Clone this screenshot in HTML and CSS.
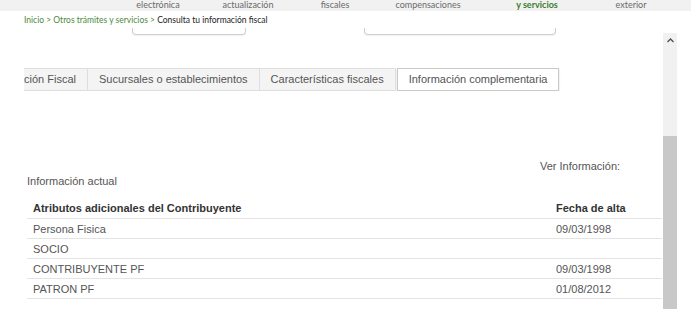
FILE: index.html
```html
<!DOCTYPE html>
<html lang="es">
<head>
<meta charset="utf-8">
<title>Consulta tu información fiscal</title>
<link rel="stylesheet" href="styles.css">
</head>
<body>
<nav class="topnav">
  <span class="nav-item w1">electrónica</span>
  <span class="nav-item w2">actualización</span>
  <span class="nav-item w3">fiscales</span>
  <span class="nav-item w4">compensaciones</span>
  <span class="nav-item w5 active">y servicios</span>
  <span class="nav-item w6">exterior</span>
</nav>
<div class="breadcrumb">
  <a class="crumb">Inicio</a> &gt; <a class="crumb">Otros trámites y servicios</a> &gt; <span class="current">Consulta tu información fiscal</span>
</div>
<div class="main">
  <div class="content">
    <div class="selects">
      <div class="select s1"></div>
      <div class="select s2"></div>
    </div>
    <div class="tabs">
      <div class="tab tab-clip"><span>Ubicación Fiscal</span></div>
      <div class="tab">Sucursales o establecimientos</div>
      <div class="tab">Características fiscales</div>
      <div class="tab tab-active">Información complementaria</div>
    </div>
    <div class="ver">Ver Información:</div>
    <div class="actual">Información actual</div>
    <table class="attrs">
      <thead>
        <tr><th class="c1">Atributos adicionales del Contribuyente</th><th class="c2">Fecha de alta</th></tr>
      </thead>
      <tbody>
        <tr><td>Persona Fisica</td><td>09/03/1998</td></tr>
        <tr><td>SOCIO</td><td></td></tr>
        <tr><td>CONTRIBUYENTE PF</td><td>09/03/1998</td></tr>
        <tr><td>PATRON PF</td><td>01/08/2012</td></tr>
        <tr><td>&nbsp;</td><td></td></tr>
      </tbody>
    </table>
  </div>
  <div class="scrollbar">
    <div class="arrow"><svg width="7" height="5" viewBox="0 0 7 5"><path d="M0.5 4 L3.5 1 L6.5 4" fill="none" stroke="#505050" stroke-width="1.4"/></svg></div>
    <div class="thumb"></div>
  </div>
</div>
</body>
</html>
```
FILE: styles.css
```css
html, body {
  margin: 0;
  padding: 0;
  background: #ffffff;
  overflow: hidden;
}
body {
  width: 691px;
  height: 309px;
  font-family: "Liberation Sans", Arial, sans-serif;
}
.topnav {
  display: flex;
  height: 11px;
  background: #f1f1f1;
  padding-left: 110px;
  font-family: Lato, "Open Sans", sans-serif;
  font-size: 9px;
  line-height: 10px;
  color: #6a6a6a;
  overflow: hidden;
}
.nav-item {
  text-align: center;
  white-space: nowrap;
}
.w1 { width: 96px; }
.w2 { width: 84px; }
.w3 { width: 90px; }
.w4 { width: 96px; }
.w5 { width: 122px; }
.w6 { width: 66px; }
.nav-item.active {
  color: #3c7d2c;
  font-weight: bold;
}
.breadcrumb {
  padding: 4px 0 0 24px;
  height: 13px;
  font-family: Lato, "Open Sans", sans-serif;
  font-size: 8.5px;
  line-height: 10px;
  color: #4b8a3c;
}
.crumb { color: #4b8a3c; }
.current { color: #222222; }
.main {
  display: flex;
}
.content {
  width: 663px;
}
.selects {
  display: flex;
  height: 9px;
}
.select {
  height: 6px;
  border: 1px solid #cfcfcf;
  border-top: none;
  border-radius: 0 0 4px 4px;
  box-shadow: 0 1px 1px rgba(0,0,0,0.06);
}
.s1 { margin-left: 132px; width: 112px; }
.s2 { margin-left: 118px; width: 190px; }
.tabs {
  display: flex;
  margin: 31px 0 0 24px;
  height: 23px;
  overflow: hidden;
  font-size: 11px;
  color: #555555;
}
.tab {
  height: 21px;
  line-height: 21px;
  padding: 0 11px;
  background: #f4f4f4;
  border: 1px solid #dedede;
  border-left: none;
  white-space: nowrap;
  box-shadow: 1px 1px 1px rgba(0,0,0,0.05);
}
.tab-clip {
  width: 52px;
  display: flex;
  justify-content: flex-end;
  overflow: hidden;
  padding: 0 11px 0 0;
}
.tab-active {
  background: #ffffff;
  border: 1px solid #c9c9c9;
  margin-left: 1px;
}
.ver {
  margin: 69px 0 0 540px;
  font-size: 11px;
  line-height: 13px;
  color: #555555;
}
.actual {
  margin: 2px 0 0 27px;
  font-size: 11px;
  line-height: 13px;
  color: #555555;
}
.attrs {
  margin: 10px 0 0 27px;
  width: 635px;
  border-collapse: collapse;
  font-size: 11px;
  color: #555555;
}
.attrs th {
  text-align: left;
  font-weight: bold;
  color: #333333;
  height: 20px;
  padding: 0 6px;
  border-bottom: 1px solid #e4e4e4;
}
.attrs th.c1 { width: 511px; }
.attrs td {
  height: 19px;
  padding: 0 6px;
  border-bottom: 1px solid #e4e4e4;
}
.scrollbar {
  width: 14px;
  margin-top: 5px;
  height: 276px;
  background: #f1f1f1;
  display: flex;
  flex-direction: column;
}
.arrow {
  height: 10px;
  display: flex;
  align-items: flex-end;
  justify-content: center;
}
.thumb {
  margin-top: 93px;
  flex: 1;
  background: #c8c8c8;
}
```
